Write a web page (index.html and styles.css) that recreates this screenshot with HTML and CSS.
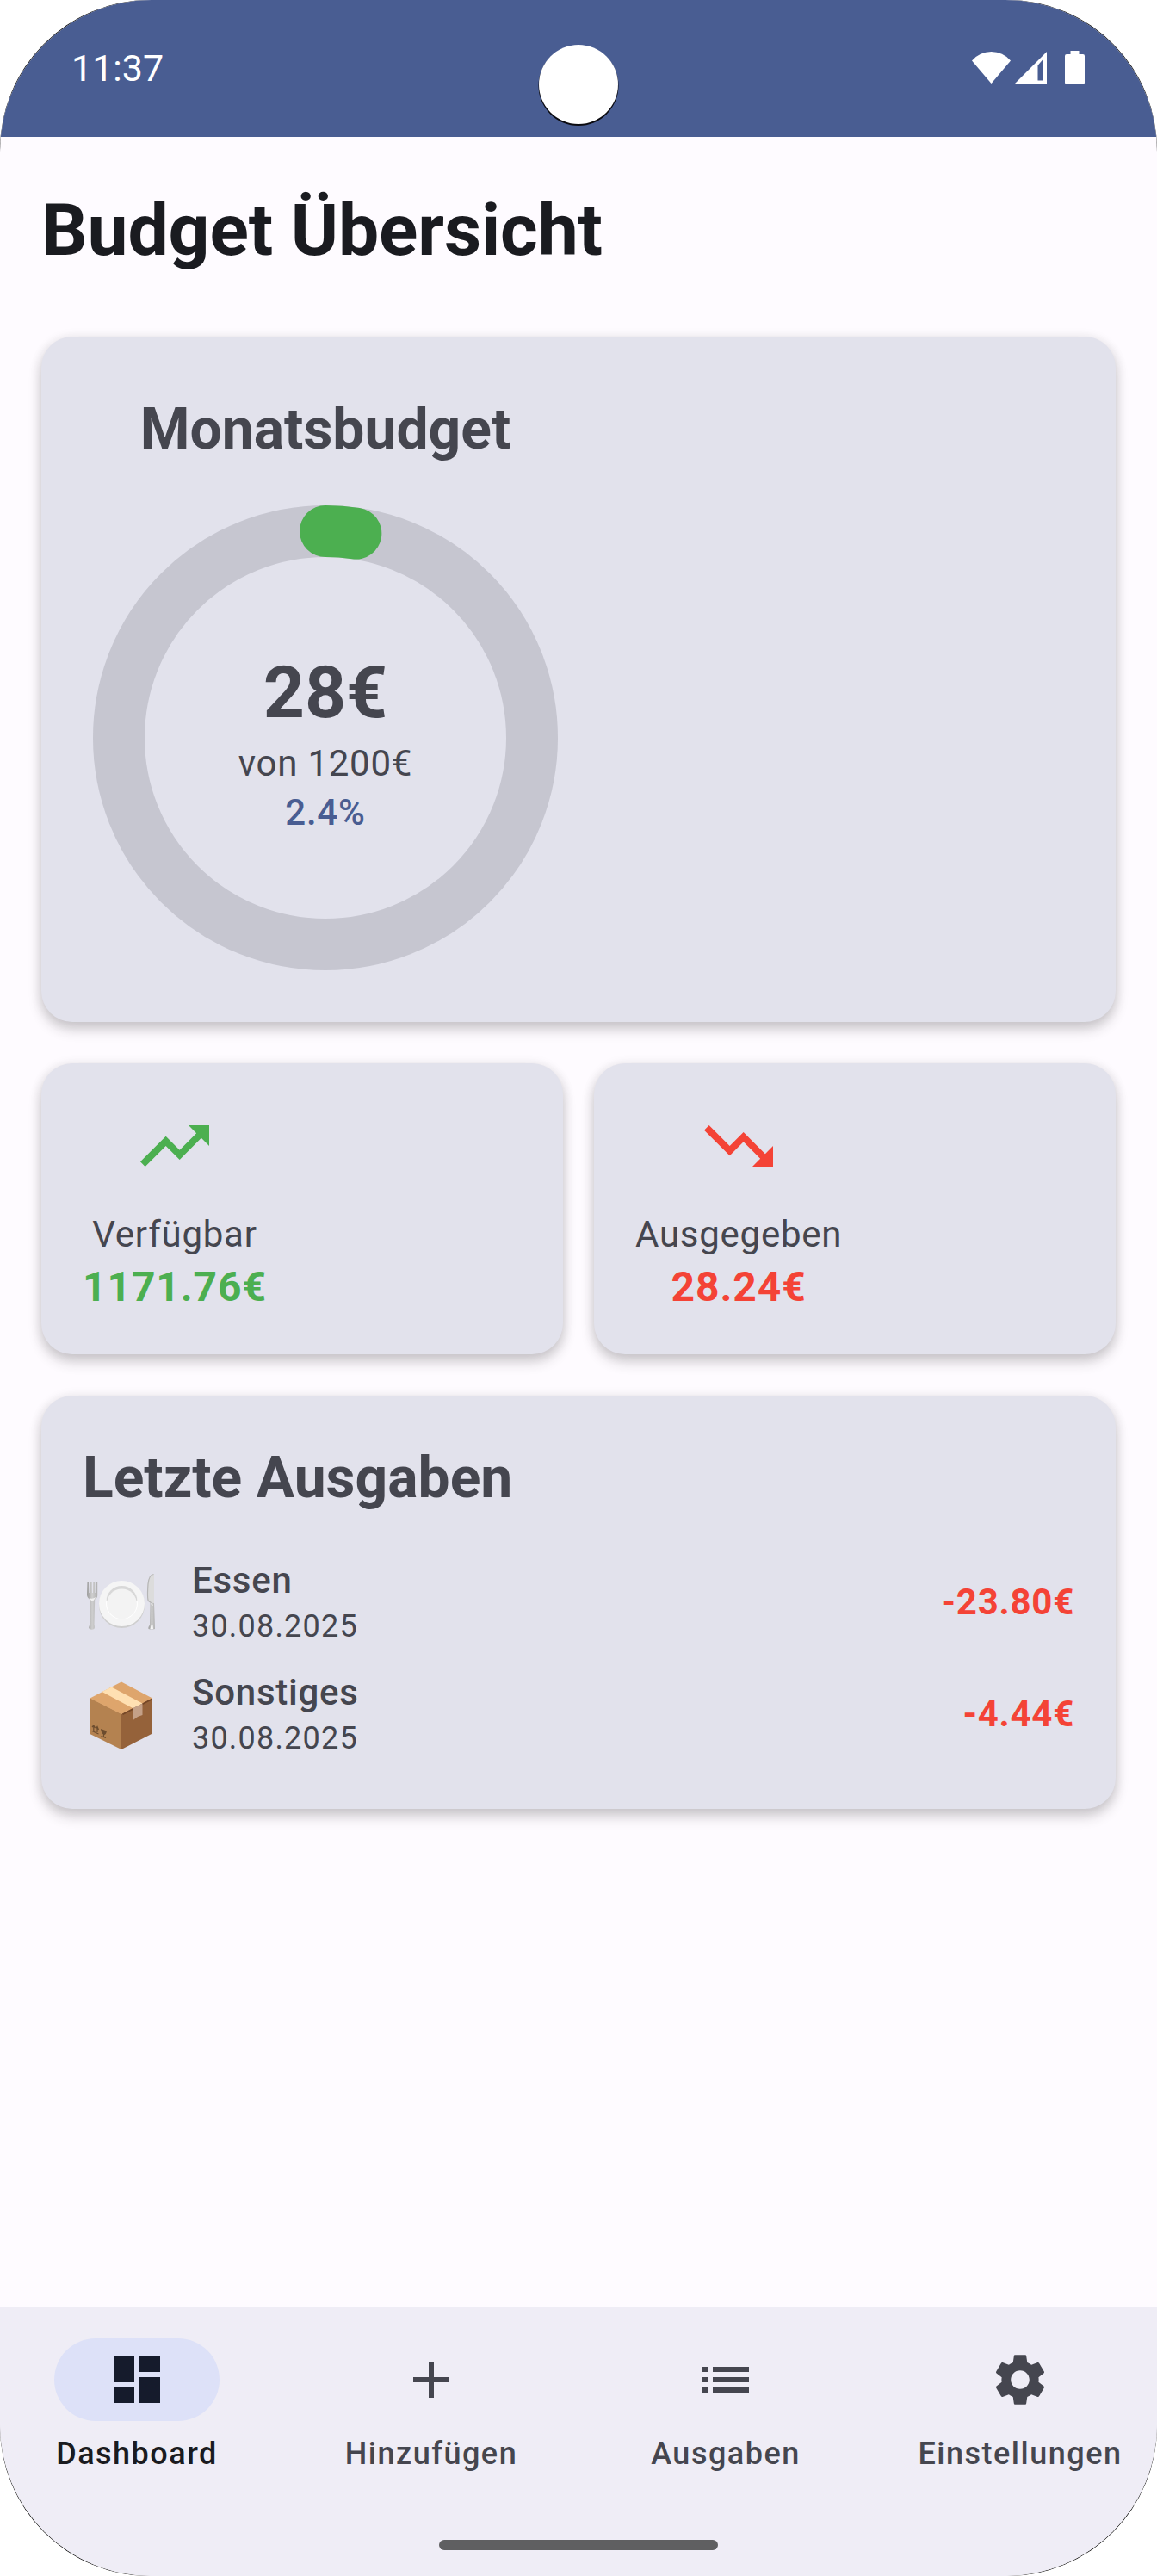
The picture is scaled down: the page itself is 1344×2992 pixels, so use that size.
FILE: index.html
```html
<!DOCTYPE html>
<html lang="de">
<head>
<meta charset="utf-8">
<title>Budget Übersicht</title>
<link rel="stylesheet" href="styles.css">
</head>
<body>
<div class="phone">
<div class="screen">
  <header class="status-bar">
    <span class="clock">11:37</span>
    <span class="camera"></span>
    <svg class="status-icons" viewBox="0 0 134 42" fill="#fff">
      <path d="M1 12.500Q10 2 23.500 2Q37 2 46 12.500L23.500 39z"/>
      <path fill-rule="evenodd" d="M50 40L88 2V40zM77.500 18V35.500H83.500V11z"/>
      <path d="M115.500 1h10v4h4.500a2 2 0 0 1 2 2v31a2 2 0 0 1-2 2h-19a2 2 0 0 1-2-2V7a2 2 0 0 1 2-2h4.500z"/>
    </svg>
  </header>
  <main class="content">
    <h1 class="page-title">Budget Übersicht</h1>

    <section class="card budget">
      <div class="budget-column">
        <h2 class="card-title">Monatsbudget</h2>
        <div class="ring">
          <svg class="ring-chart" viewBox="0 0 540 540" fill="none" stroke-width="60">
            <circle cx="270" cy="270" r="240" stroke="#c6c6d0"/>
            <path d="M270 30A240 240 0 0 1 305.350 32.620" stroke="#4caf50" stroke-linecap="round"/>
          </svg>
          <div class="ring-label">
            <span class="spent">28€</span>
            <span class="limit">von 1200€</span>
            <span class="percent">2.4%</span>
          </div>
        </div>
      </div>
    </section>

    <div class="stats">
      <section class="card stat">
        <div class="stat-column up">
          <svg class="trend" viewBox="0 0 24 24" fill="currentColor"><path d="M16 6l2.290 2.290-4.880 4.880-4-4L2 16.590 3.410 18l6-6 4 4 6.300-6.290L22 12V6z"/></svg>
          <span class="stat-label">Verfügbar</span>
          <span class="stat-value">1171.76€</span>
        </div>
      </section>
      <section class="card stat">
        <div class="stat-column down">
          <svg class="trend" viewBox="0 0 24 24" fill="currentColor"><path d="M16 18l2.290-2.290-4.880-4.880-4 4L2 7.410 3.410 6l6 6 4-4 6.300 6.290L22 12v6z"/></svg>
          <span class="stat-label">Ausgegeben</span>
          <span class="stat-value">28.24€</span>
        </div>
      </section>
    </div>

    <section class="card recent">
      <h2 class="card-title">Letzte Ausgaben</h2>
      <ul class="expenses">
        <li class="expense">
          <svg class="emoji" viewBox="0 0 90 90">
            <defs>
              <linearGradient id="steel" x1="0" x2="1" y1="0" y2="0">
                <stop offset="0" stop-color="#9b9b9b"/><stop offset=".5" stop-color="#cfcfcf"/><stop offset="1" stop-color="#b0b0b0"/>
              </linearGradient>
            </defs>
            <path fill="url(#steel)" d="M5.500 23H7l.4 13h1L8.600 23h2.200l.2 13h1l.2-13h2l.2 13h1l.4-13h1.400V39q0 3-3 4.500L13.500 73q1.500 5-1.500 5.500-3.500.800-5-1.500 0-2 1.500-4L9 44q-4-2-4-6z"/>
            <path fill="#f1f1f1" d="M7.500 42q3.500 2 8-1l-3 4H10z"/>
            <circle cx="45.500" cy="50.500" r="26.500" fill="#cfcfcf"/>
            <circle cx="45.500" cy="48.500" r="26.500" fill="#f5f5f5"/>
            <circle cx="45.500" cy="48.500" r="18.500" fill="#fff"/>
            <path fill="#d8d8d8" d="M27.500 46a18 18 0 0 1 36 0z"/>
            <circle cx="45.500" cy="48.800" r="17.400" fill="#f3f3f3"/>
            <path fill="#dcdcdc" d="M83 14.500V48l-4.500-.5Q75 45 75 38q0-18 4-22 2-2 4-1.500z"/>
            <path fill="none" stroke="#b5b5b5" stroke-width="1.200" d="M82.500 14.500Q77 15 76 26q-1.200 17 .5 19.500L81 48.500"/>
            <path fill="url(#steel)" d="M78.500 47.500L83 48l1 30q-4 1-7.500 0-.5-2 1.500-5z"/>
            <path fill="#f6f6f6" d="M79.500 74h2l.5 4h-3.500zM79 48l3 2-1.500 1.500z"/>
          </svg>
          <div class="expense-text">
            <span class="expense-name">Essen</span>
            <span class="expense-date">30.08.2025</span>
          </div>
          <span class="amount">-23.80€</span>
        </li>
        <li class="expense">
          <svg class="emoji" viewBox="0 0 90 90">
            <path fill="#b48250" d="M8.500 28L45 46.500V88L8.500 70z"/>
            <path fill="#95623a" d="M81 28L45 46.500V88l36-18.500z"/>
            <path fill="#dea56c" d="M45 9.500L81 28.500 45 47 8.500 28.500z"/>
            <path fill="none" stroke="#754727" stroke-width="1.800" d="M46.500 47.200L80.500 29.500"/>
            <path fill="#ffe0b2" d="M33.500 15.500L22.500 21 58.500 40.300 69.500 34.500z"/>
            <path fill="#c4a087" d="M58.500 40L69.500 34.500V48l-5.500 2-5.500 4z"/>
            <path fill="none" stroke="#6c4c2e" stroke-width="1.200" d="M11 66.500l7.500 3.500M12.800 66V60.500M17 68V62M11 62l1.800-2 1.700 3M15.200 64l1.800-2.500 1.500 3.500M24.500 69v4M21.500 72.500l5.500 2"/>
            <path fill="#6c4c2e" d="M21 64l7 2.500q-1 5-3.500 4.500Q21.500 69 21 64z"/>
          </svg>
          <div class="expense-text">
            <span class="expense-name">Sonstiges</span>
            <span class="expense-date">30.08.2025</span>
          </div>
          <span class="amount">-4.44€</span>
        </li>
      </ul>
    </section>
  </main>

  <nav class="bottom-nav">
    <div class="tabs">
      <a class="tab active">
        <span class="pill"><svg class="tab-icon" viewBox="0 0 24 24" fill="currentColor"><path d="M3 13h8V3H3zm0 8h8v-6H3zm10 0h8V11h-8zm0-18v6h8V3z"/></svg></span>
        <span class="tab-label">Dashboard</span>
      </a>
      <a class="tab">
        <span class="pill"><svg class="tab-icon" viewBox="0 0 24 24" fill="currentColor"><path d="M19 13h-6v6h-2v-6H5v-2h6V5h2v6h6z"/></svg></span>
        <span class="tab-label">Hinzufügen</span>
      </a>
      <a class="tab">
        <span class="pill"><svg class="tab-icon" viewBox="0 0 24 24" fill="currentColor"><path d="M3 13h2v-2H3zm0 4h2v-2H3zm0-8h2V7H3zm4 4h14v-2H7zm0 4h14v-2H7zM7 7v2h14V7z"/></svg></span>
        <span class="tab-label">Ausgaben</span>
      </a>
      <a class="tab">
        <span class="pill"><svg class="tab-icon" viewBox="0 0 24 24" fill="currentColor"><path d="M19.140 12.940c.040-.3.060-.610.060-.940 0-.320-.020-.640-.070-.940l2.030-1.580c.180-.140.230-.410.120-.610l-1.920-3.320c-.120-.220-.370-.290-.590-.220l-2.390.960c-.5-.380-1.030-.7-1.620-.940l-.360-2.540c-.040-.240-.240-.410-.480-.410h-3.840c-.240 0-.430.170-.470.410l-.360 2.540c-.590.240-1.130.570-1.620.940l-2.390-.960c-.220-.080-.470 0-.590.220L2.740 8.870c-.120.210-.080.470.120.610l2.030 1.580c-.050.300-.090.630-.090.940s.020.640.070.940l-2.030 1.580c-.180.140-.230.410-.120.610l1.920 3.320c.120.220.370.290.590.220l2.390-.960c.5.380 1.030.7 1.620.940l.360 2.540c.050.240.240.410.480.410h3.840c.240 0 .440-.170.470-.410l.360-2.540c.590-.240 1.130-.560 1.620-.940l2.390.960c.220.080.470 0 .590-.220l1.920-3.320c.120-.220.070-.470-.120-.610l-2.010-1.580zM12 15.600c-1.980 0-3.600-1.620-3.600-3.600s1.620-3.600 3.600-3.600 3.600 1.620 3.600 3.600-1.620 3.600-3.600 3.600z"/></svg></span>
        <span class="tab-label">Einstellungen</span>
      </a>
    </div>
    <div class="home-bar"></div>
  </nav>
</div>
</div>
</body>
</html>
```
FILE: styles.css
```css
* { box-sizing: border-box; }

body {
  margin: 0;
  background: #fff;
  font-family: Roboto, "Liberation Sans", sans-serif;
  color: #45464f;
}

h1, h2, ul { margin: 0; padding: 0; }
svg { display: block; }

.phone {
  width: 1344px;
  height: 2992px;
  border-radius: 174px;
  background: #111;
}

.screen {
  display: flex;
  flex-direction: column;
  height: 100%;
  border-radius: 176px;
  overflow: hidden;
  background: #fefbff;
}

.status-bar {
  position: relative;
  display: flex;
  justify-content: space-between;
  align-items: flex-start;
  flex: none;
  height: 159px;
  padding: 54px 82px 0 83px;
  background: #495d92;
  color: #fff;
}

.clock { font-size: 43px; line-height: 51px; }

.camera {
  position: absolute;
  left: 626px;
  top: 52px;
  width: 92px;
  height: 92px;
  border-radius: 50%;
  background: #fff;
  box-shadow: 0 1.5px 0 .5px #0b0b10;
}

.status-icons { width: 134px; height: 42px; margin-top: 4px; }

.content {
  flex: 1;
  display: flex;
  flex-direction: column;
  gap: 48px;
  padding: 49px 48px 0;
}

.page-title {
  margin-bottom: 15px;
  font-size: 84px;
  line-height: 120px;
  letter-spacing: -.13px;
  font-weight: 700;
  color: #1a1b20;
}

.card {
  border-radius: 36px;
  background: #e2e2ec;
  box-shadow: 0 9px 15px rgba(40, 34, 40, .2), 0 2px 14px rgba(40, 34, 40, .11);
}

.card-title { font-size: 66px; line-height: 96px; font-weight: 700; }

.budget { padding: 60px; }

.budget-column {
  display: flex;
  flex-direction: column;
  align-items: center;
  gap: 40px;
  width: 540px;
}

.ring { display: grid; width: 540px; height: 540px; }
.ring-chart, .ring-label { grid-area: 1 / 1; }

.ring-label {
  display: flex;
  flex-direction: column;
  align-items: center;
  justify-content: center;
  padding-top: 8px;
}

.spent { padding-top: 2px; font-size: 84px; line-height: 106px; font-weight: 700; }
.limit { font-size: 42px; line-height: 57px; letter-spacing: .75px; }
.percent { font-size: 42px; line-height: 57px; letter-spacing: .75px; font-weight: 500; color: #495d92; }

.stats { display: grid; grid-template-columns: 1fr 1fr; gap: 36px; }
.stat { padding: 48px 48px 47px; }

.stat-column {
  display: flex;
  flex-direction: column;
  align-items: center;
  width: fit-content;
}

.up { color: #4caf50; }
.down { color: #f44336; }
.trend { width: 96px; height: 96px; margin-bottom: 25px; }
.stat-label { font-size: 42px; line-height: 60px; letter-spacing: .75px; color: #45464f; }
.stat-value { font-size: 48px; line-height: 62px; letter-spacing: .9px; font-weight: 700; }

.recent { padding: 48px 48px 47px; }
.expenses { margin-top: 29px; list-style: none; }

.expense {
  display: flex;
  align-items: center;
  height: 130px;
}

.emoji { width: 90px; height: 90px; }

.expense-text {
  display: flex;
  flex-direction: column;
  flex: 1;
  margin-left: 37px;
  padding-top: 2px;
}

.expense-name { font-size: 42px; line-height: 58px; letter-spacing: .75px; font-weight: 500; }
.expense-date { font-size: 36px; line-height: 48px; letter-spacing: 1.2px; }
.amount { padding-top: 4px; font-size: 42px; line-height: 60px; letter-spacing: .75px; font-weight: 700; color: #f44336; }

.bottom-nav {
  display: flex;
  flex-direction: column;
  justify-content: space-between;
  align-items: center;
  flex: none;
  height: 312px;
  padding: 36px 0 30px;
  background: #efedf6;
}

.tabs {
  display: grid;
  grid-template-columns: repeat(4, 1fr);
  gap: 24px;
  width: 100%;
}

.tab {
  display: flex;
  flex-direction: column;
  align-items: center;
  gap: 14px;
}

.pill {
  display: grid;
  place-items: center;
  width: 192px;
  height: 96px;
  border-radius: 48px;
}

.tab-icon { width: 72px; height: 72px; }
.tab-label { font-size: 36px; line-height: 48px; letter-spacing: 1.5px; font-weight: 500; }

.active .pill { background: #dde1f8; color: #151b2c; }
.active .tab-label { color: #1a1b20; }

.home-bar { width: 324px; height: 12px; border-radius: 6px; background: #5f5f61; }
```
